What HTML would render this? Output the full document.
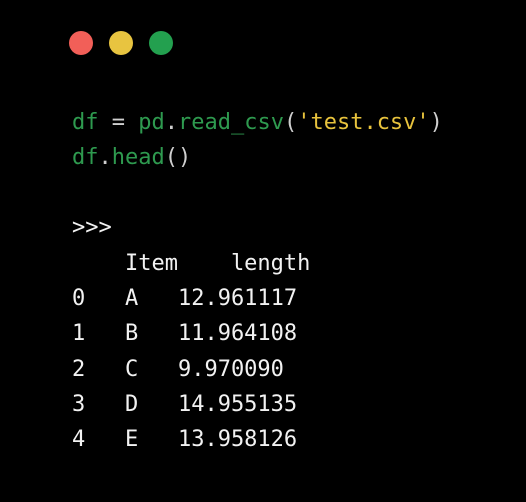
<!DOCTYPE html>
<html><head><style>
html,body{margin:0;padding:0;background:#000;width:526px;height:502px;overflow:hidden}
.d{position:absolute;top:31px;width:24px;height:24px;border-radius:50%}
pre{position:absolute;left:72px;top:104.5px;margin:0;font-family:"DejaVu Sans Mono","Liberation Mono",monospace;font-size:22px;line-height:35.3px;color:#f2f2f2}
.g{color:#2e9a4f}.y{color:#e8c33d}.p{color:#cfcfcf}
</style></head><body>
<div class="d" style="left:69px;background:#f25f58"></div>
<div class="d" style="left:109px;background:#e8c440"></div>
<div class="d" style="left:149px;background:#23a04f"></div>
<pre><span class="g">df</span> <span class="p">=</span> <span class="g">pd</span><span class="p">.</span><span class="g">read_csv</span><span class="p">(</span><span class="y">'test.csv'</span><span class="p">)</span>
<span class="g">df</span><span class="p">.</span><span class="g">head</span><span class="p">()</span>

&gt;&gt;&gt;
    Item    length
0   A   12.961117
1   B   11.964108
2   C   9.970090
3   D   14.955135
4   E   13.958126</pre>
</body></html>
